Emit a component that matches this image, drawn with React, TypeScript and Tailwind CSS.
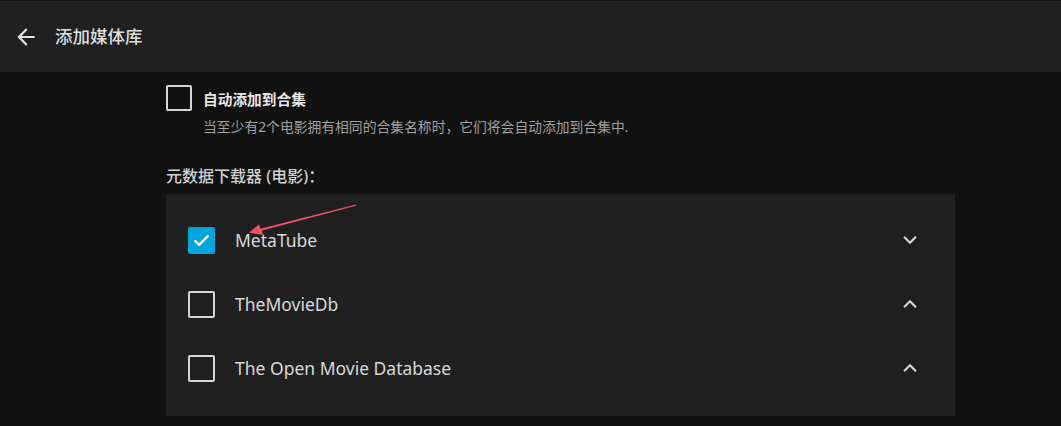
import React from "react";

const font = { fontFamily: '"Noto Sans", "Noto Sans CJK SC", sans-serif' };

function Chevron({ up }: { up?: boolean }) {
  return (
    <svg width="26" height="26" viewBox="0 0 24 24" className={up ? "rotate-180" : ""}>
      <path d="M16.8 8.4L12 13.2 7.2 8.4 5.8 9.8l6.2 6.2 6.2-6.2z" fill="#d4d4d4" />
    </svg>
  );
}

function Box({ checked }: { checked?: boolean }) {
  if (checked) {
    return (
      <div className="w-[27px] h-[27px] rounded-[2px] bg-[#00a4dc] flex items-center justify-center shrink-0">
        <svg width="19" height="19" viewBox="0 0 24 24">
          <path d="M4 12.5l5 5L20 6.5" stroke="#fff" strokeWidth="2.8" fill="none" strokeLinecap="round" strokeLinejoin="round" />
        </svg>
      </div>
    );
  }
  return <div className="w-[27px] h-[27px] rounded-[2px] border-2 border-[#d6d6d6] shrink-0" />;
}

const fetchers = [
  { name: "MetaTube", checked: true, up: false },
  { name: "TheMovieDb", checked: false, up: true },
  { name: "The Open Movie Database", checked: false, up: true },
];

export default function App() {
  return (
    <div className="w-[1061px] h-[426px] bg-[#111111] overflow-hidden relative" style={font}>
      {/* Header */}
      <header className="mt-px h-[71px] bg-[#202020] flex items-center">
        <div className="ml-[13px] w-[26px] h-[26px]">
          <svg width="26" height="26" viewBox="0 0 24 24">
            <path d="M20 11H7.83l5.59-5.59L12 4l-8 8 8 8 1.41-1.41L7.83 13H20v-2z" fill="#e0e0e0" />
          </svg>
        </div>
        <h1 className="ml-[16px] text-[17.5px] text-[#dedede] font-medium leading-none">添加媒体库</h1>
      </header>

      <div className="pl-[166px] w-[955px]">
        {/* Collections checkbox */}
        <div className="mt-[13px] flex items-start gap-[11px]">
          <div className="w-[26px] h-[26px] rounded-[2px] border-2 border-[#d6d6d6] shrink-0" />
          <div>
            <div className="text-[14.7px] leading-[28px] font-semibold text-[#e6e6e6]">自动添加到合集</div>
            <div className="text-[13.8px] leading-[20px] text-[#a0a0a0] mt-[4px]">
              当至少有2个电影拥有相同的合集名称时，它们将会自动添加到合集中.
            </div>
          </div>
        </div>

        <h2 className="mt-[28px] text-[16px] leading-[22px] font-medium text-[#d0d0d0]">元数据下载器 (电影)：</h2>

        {/* Metadata fetchers */}
        <div className="mt-[7px] bg-[#202020] pt-[14px] pb-[16px] pl-[22px] pr-[32px]">
          {fetchers.map((f) => (
            <div key={f.name} className="h-16 flex items-center">
              <Box checked={f.checked} />
              <span className="ml-[20px] text-[17.5px] text-[#d8d8d8] flex-1">{f.name}</span>
              <Chevron up={f.up} />
            </div>
          ))}
        </div>
      </div>

      {/* annotation arrow */}
      <svg className="absolute left-0 top-0 pointer-events-none" width="1061" height="426">
        <polygon points="356,204.5 356,205.8 262,230.6 263,235 249,232.5 259,224.5 260.5,228.8" fill="#f0506e" />
      </svg>
    </div>
  );
}
